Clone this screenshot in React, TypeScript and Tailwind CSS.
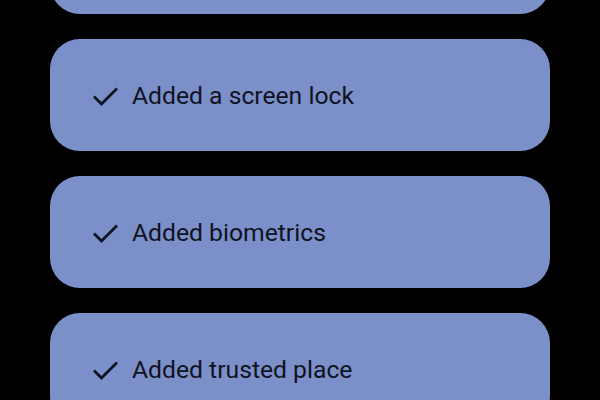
const items = ['', 'Added a screen lock', 'Added biometrics', 'Added trusted place'];

function Check() {
  return (
    <svg width="26" height="26" viewBox="0 0 26 26" fill="none" stroke="currentColor" strokeWidth="2.8" strokeLinecap="butt" strokeLinejoin="miter">
      <path d="M2 12.5 L9.5 20 L25 4.5" />
    </svg>
  );
}

export default function App() {
  return (
    <div className="w-[600px] h-[400px] overflow-hidden bg-black" style={{ fontFamily: 'Roboto, "Noto Sans", sans-serif' }}>
      <div className="flex flex-col gap-[25px] px-[50px] -mt-[98px]">
        {items.map((label, i) => (
          <div key={i} className="h-[112px] rounded-[30px] bg-[#7b8fc9] flex items-center pl-[42px] pt-[3px] text-[#101322]">
            {label && (
              <>
                <Check />
                <span className="ml-[14px] text-[24.7px] leading-none">{label}</span>
              </>
            )}
          </div>
        ))}
      </div>
    </div>
  );
}
